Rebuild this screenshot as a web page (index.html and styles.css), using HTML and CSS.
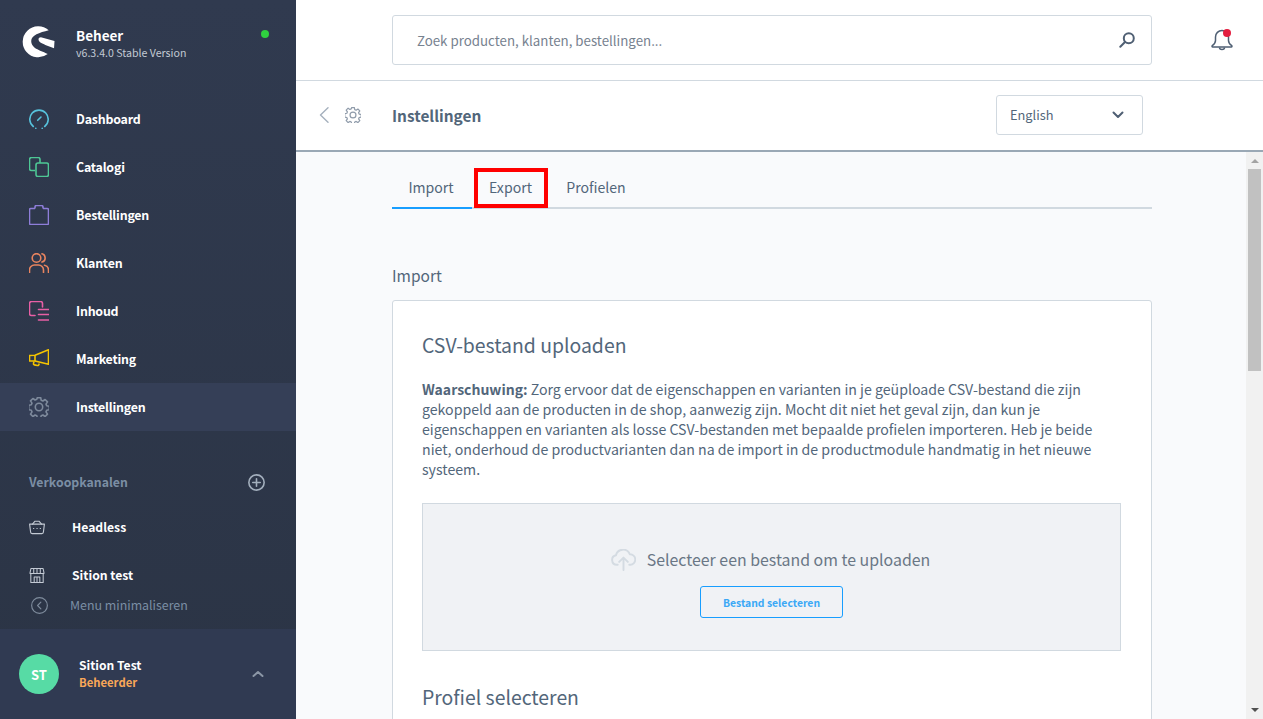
FILE: index.html
```html
<!DOCTYPE html>
<html lang="nl">
<head>
<meta charset="utf-8">
<title>Instellingen</title>
<link rel="stylesheet" href="styles.css">
</head>
<body>
<div class="app">
  <aside class="sidebar">
    <div class="brand">
      <svg class="logo" viewBox="0 0 34 34"><path fill="#fff" d="M27.500 5.500A16 16 0 1 0 26.500 30C21 26.500 9.500 25 9.500 16.500 9.500 10.500 18 8 27.500 5.500z"/><path fill="#fff" d="M19.500 12.500 33.500 16.500 33 24 24 20.500C21 19.300 17 18 17 14.800 17 13.300 18 12.500 19.500 12.500z"/></svg>
      <div class="brand-text">
        <div class="brand-name">Beheer</div>
        <div class="brand-version">v6.3.4.0 Stable Version</div>
      </div>
      <span class="status-dot"></span>
    </div>
    <nav class="main-nav">
      <a class="nav-item"><svg class="nav-icon" viewBox="0 0 20 20" fill="none" stroke="#57c2dc" stroke-width="1.600" stroke-linecap="round" stroke-linejoin="round"><path d="M4.300 17.500A9.200 9.200 0 1 1 15.700 17.500"/><path d="M8.700 11.300 12 8"/><path d="M6.800 19.300h.01M13.200 19.300h.01"/></svg><span>Dashboard</span></a>
      <a class="nav-item"><svg class="nav-icon" viewBox="0 0 20 20" fill="none" stroke="#4ec795" stroke-width="1.600" stroke-linejoin="round"><path d="M6 13.500H2.500a2 2 0 0 1-2-2V2.500a2 2 0 0 1 2-2h6.500a2 2 0 0 1 2 2V6"/><rect x="7" y="6" width="12.500" height="13.500" rx="2"/></svg><span>Catalogi</span></a>
      <a class="nav-item"><svg class="nav-icon" viewBox="0 0 20 20" fill="none" stroke="#8e7ed9" stroke-width="1.600" stroke-linejoin="round"><path d="M6 3.500H1.800a1.300 1.300 0 0 0-1.300 1.300v13.400a1.300 1.300 0 0 0 1.300 1.300h16.400a1.300 1.300 0 0 0 1.300-1.300V4.800a1.300 1.300 0 0 0-1.300-1.300H14"/><path d="M6 3.500V2a1.500 1.500 0 0 1 1.500-1.500h5A1.500 1.500 0 0 1 14 2v1.500"/></svg><span>Bestellingen</span></a>
      <a class="nav-item"><svg class="nav-icon" viewBox="0 0 20 20" fill="none" stroke="#e8845f" stroke-width="1.600" stroke-linecap="round"><circle cx="7.500" cy="5" r="4.300"/><path d="M.5 19.500v-2.500a5 5 0 0 1 5-5h4a5 5 0 0 1 5 5v2.500"/><path d="M13 .8a4.300 4.300 0 0 1 0 8.300"/><path d="M15.500 12.200a5 5 0 0 1 4 4.800v2.500"/></svg><span>Klanten</span></a>
      <a class="nav-item"><svg class="nav-icon" viewBox="0 0 20 20" fill="none" stroke="#e85fa5" stroke-width="1.600" stroke-linecap="round" stroke-linejoin="round"><path d="M13.500 6V2.500a2 2 0 0 0-2-2h-9a2 2 0 0 0-2 2v10a2 2 0 0 0 2 2H6"/><path d="M9.500 8.500h10M9.500 13.500h10M9.500 19h10"/></svg><span>Inhoud</span></a>
      <a class="nav-item"><svg class="nav-icon" viewBox="0 0 20 20" fill="none" stroke="#f5c400" stroke-width="1.600" stroke-linejoin="round"><path d="M.5 6.500 6 6.300 19.500.8v14.400L6 12H.5z"/><path d="M6 6.300V12"/><path d="M5 12.500l-.5 1.800a1.300 1.300 0 0 0 .9 1.600l3 .6a1.300 1.300 0 0 0 1.600-1.100v-1"/></svg><span>Marketing</span></a>
      <a class="nav-item is-active"><svg class="nav-icon" viewBox="0 0 20 20" fill="none" stroke="#7e8a9c" stroke-width="1.600" stroke-linejoin="round"><path d="M8.300.7h3.400l.5 2.600 1.700.7 2.200-1.500 2.400 2.400-1.500 2.200.7 1.700 2.600.5v3.400l-2.600.5-.7 1.700 1.500 2.200-2.400 2.400-2.200-1.500-1.700.7-.5 2.600H8.300l-.5-2.600-1.700-.7-2.200 1.500-2.400-2.400 1.500-2.200-.7-1.700-2.600-.5V8.300l2.600-.5.7-1.700L1.500 3.900l2.400-2.400 2.200 1.500 1.700-.7z"/><circle cx="10" cy="10" r="3.700"/></svg><span>Instellingen</span></a>
    </nav>
    <div class="channels-head">
      <span>Verkoopkanalen</span>
      <svg class="plus-icon" viewBox="0 0 16 16" fill="none" stroke="#a3afbd" stroke-width="1.500" stroke-linecap="round"><circle cx="8" cy="8" r="7.200"/><path d="M8 4.500v7M4.500 8h7"/></svg>
    </div>
    <a class="channel"><svg class="channel-icon" viewBox="0 0 16 14" fill="none" stroke="#c3cad4" stroke-width="1.100" stroke-linecap="round" stroke-linejoin="round"><path d="M.6 3.600h14.800l-1 8a1.500 1.500 0 0 1-1.500 1.500H3.100a1.500 1.500 0 0 1-1.500-1.500z"/><path d="M3.500 3.600 6 .7h4l2.500 2.900"/><path d="M4.500 8h.3M7.900 8h.3M11.200 8h.3"/></svg><span>Headless</span></a>
    <a class="channel channel-second"><svg class="channel-icon" viewBox="0 0 16 16" fill="none" stroke="#c3cad4" stroke-width="1.100" stroke-linejoin="round"><path d="M1.500.6h13l.9 4.300v1H.6v-1z"/><path d="M1.400 6v9.400h13.200V6"/><path d="M4.500.8v5M8 .8v5M11.500.8v5"/><path d="M5 15.300v-5.800h6v5.800M8 9.500v5.800"/></svg><span>Sition test</span></a>
    <a class="minimize"><svg class="minimize-icon" viewBox="0 0 16 16" fill="none" stroke="#7e8b9c" stroke-width="1.100" stroke-linecap="round" stroke-linejoin="round"><circle cx="8" cy="8" r="7.400"/><path d="M9.300 4.800 6.200 8l3.100 3.200"/></svg><span>Menu minimaliseren</span></a>
    <div class="user">
      <div class="avatar">ST</div>
      <div class="user-text">
        <div class="user-name">Sition Test</div>
        <div class="user-role">Beheerder</div>
      </div>
      <svg class="user-caret" viewBox="0 0 12 8" fill="none" stroke="#8b96a6" stroke-width="2" stroke-linecap="round" stroke-linejoin="round"><path d="M1.500 6 6 2l4.500 4"/></svg>
    </div>
  </aside>
  <main class="main">
    <header class="search-bar">
      <div class="search">
        <span class="search-placeholder">Zoek producten, klanten, bestellingen...</span>
        <svg class="search-icon" viewBox="0 0 16 16" fill="none" stroke="#4f5f73" stroke-width="2" stroke-linecap="round"><circle cx="9.800" cy="6.200" r="5"/><path d="M6 10 1.300 14.700"/></svg>
      </div>
      <div class="bell">
        <svg class="bell-icon" viewBox="0 0 22 22" fill="none" stroke="#4f5f73" stroke-width="1.500" stroke-linejoin="round"><path d="M11 1.500a6.500 6.500 0 0 0-6.500 6.500v3.500c0 2.500-1.500 4-3.200 5.200-.5.400-.3 1.300.4 1.300h18.600c.7 0 .9-.9.400-1.300-1.700-1.200-3.200-2.700-3.200-5.200V8A6.500 6.500 0 0 0 11 1.500z"/><path d="M8.500 18.500a2.500 2 0 0 0 5 0"/></svg>
        <span class="bell-badge"></span>
      </div>
    </header>
    <div class="smart-bar">
      <div class="smart-nav">
        <svg class="back-icon" viewBox="0 0 10 16" fill="none" stroke="#a5b0bd" stroke-width="1.400" stroke-linecap="round" stroke-linejoin="round"><path d="M9 .8 1.500 8 9 15.200"/></svg>
        <svg class="smart-gear" viewBox="0 0 20 20" fill="none" stroke="#8f9baa" stroke-width="1.500" stroke-linejoin="round"><path d="M8.300.7h3.400l.5 2.600 1.700.7 2.200-1.500 2.400 2.400-1.500 2.200.7 1.700 2.600.5v3.400l-2.600.5-.7 1.700 1.500 2.200-2.400 2.400-2.200-1.500-1.700.7-.5 2.600H8.300l-.5-2.600-1.700-.7-2.200 1.500-2.400-2.400 1.500-2.200-.7-1.700-2.600-.5V8.300l2.600-.5.7-1.700L1.500 3.900l2.400-2.400 2.200 1.500 1.700-.7z"/><circle cx="10" cy="10" r="3.700"/></svg>
      </div>
      <h1 class="smart-title">Instellingen</h1>
      <div class="lang-select">
        <span>English</span>
        <svg class="lang-caret" viewBox="0 0 12 8" fill="none" stroke="#4f5f73" stroke-width="2" stroke-linecap="round" stroke-linejoin="round"><path d="M1.500 1.500 6 6l4.500-4.500"/></svg>
      </div>
    </div>
    <div class="body-row">
      <div class="content">
        <div class="column">
          <div class="tabs">
            <span class="tab is-current">Import</span>
            <span class="tab tab-highlight">Export</span>
            <span class="tab">Profielen</span>
          </div>
          <h2 class="section-title">Import</h2>
          <section class="card">
            <h3 class="card-title">CSV-bestand uploaden</h3>
            <p class="card-text"><strong>Waarschuwing:</strong> Zorg ervoor dat de eigenschappen en varianten in je geüploade CSV-bestand die zijn gekoppeld aan de producten in de shop, aanwezig zijn. Mocht dit niet het geval zijn, dan kun je eigenschappen en varianten als losse CSV-bestanden met bepaalde profielen importeren. Heb je beide niet, onderhoud de productvarianten dan na de import in de productmodule handmatig in het nieuwe systeem.</p>
            <div class="dropzone">
              <div class="drop-line">
                <svg class="cloud-icon" viewBox="0 0 26 22" fill="none" stroke="#d4dbe2" stroke-width="2" stroke-linecap="round" stroke-linejoin="round"><path d="M7 16H6a5 5 0 0 1-.8-9.900A7.500 7.500 0 0 1 19.500 5a5.500 5.500 0 0 1 .5 11h-1"/><path d="M13 21.500V9M8.500 13 13 8.500 17.500 13"/></svg>
                <span>Selecteer een bestand om te uploaden</span>
              </div>
              <button class="upload-btn">Bestand selecteren</button>
            </div>
            <h3 class="card-title profile-title">Profiel selecteren</h3>
          </section>
        </div>
      </div>
      <div class="scrollbar">
        <span class="scroll-arrow"></span>
        <span class="scroll-thumb"></span>
        <span class="scroll-arrow-down"></span>
      </div>
    </div>
  </main>
</div>
</body>
</html>
```
FILE: styles.css
```css
* { box-sizing: border-box; }
html, body { margin: 0; height: 100%; overflow: hidden; }
body { font-family: "Noto Sans CJK SC", "Noto Sans", sans-serif; color: #52667a; background: #fff; }
.app { display: flex; width: 1263px; height: 719px; }

.sidebar { width: 296px; height: 719px; flex: none; display: flex; flex-direction: column; background: linear-gradient(#303a4f, #2b3445); color: #fff; }
.brand { height: 83px; flex: none; display: flex; align-items: flex-start; padding: 25px 0 0 22px; position: relative; }
.logo { width: 33px; height: 33px; flex: none; }
.brand-text { margin-left: 21px; }
.brand-name { font-size: 13.500px; line-height: 20px; font-weight: 700; }
.brand-version { font-size: 10.600px; line-height: 16px; color: #c3cad4; }
.status-dot { position: absolute; left: 261px; top: 30px; width: 8px; height: 8px; border-radius: 50%; background: #2fd13f; }
.main-nav { margin-top: 12px; display: flex; flex-direction: column; }
.nav-item { height: 48px; display: flex; align-items: center; padding-left: 29px; font-size: 12.400px; letter-spacing: -.2px; font-weight: 700; }
.nav-item span { margin-left: 27px; }
.nav-item.is-active { background: #353f57; }
.nav-icon { width: 20px; height: 20px; flex: none; }
.channels-head { display: flex; justify-content: space-between; align-items: center; padding: 0 31px 0 29px; margin-top: 42px; height: 18px; font-size: 12.300px; font-weight: 700; color: #7b8ea4; }
.plus-icon { width: 17px; height: 17px; }
.channel { display: flex; align-items: center; height: 20px; padding-left: 29px; font-size: 12.200px; font-weight: 700; margin-top: 26px; }
.channel span { margin-left: 27px; }
.channel-second { margin-top: 28px; }
.channel-icon { width: 16px; height: 15px; flex: none; }
.minimize { display: flex; align-items: center; height: 16px; padding-left: 31px; margin-top: 12px; font-size: 12.400px; color: #7b8ea4; }
.minimize span { margin-left: 22px; }
.minimize-icon { width: 17px; height: 17px; flex: none; }
.user { margin-top: auto; height: 90px; flex: none; background: #303a52; display: flex; align-items: center; padding-left: 19px; }
.avatar { width: 40px; height: 40px; border-radius: 50%; background: #57dba5; color: #fff; font-size: 13px; font-weight: 700; display: flex; align-items: center; justify-content: center; flex: none; }
.user-text { margin: -2px 0 0 20px; }
.user-name { font-size: 12.100px; line-height: 18px; font-weight: 700; }
.user-role { font-size: 11.300px; line-height: 16px; font-weight: 700; color: #f8a758; }
.user-caret { width: 12px; height: 8px; margin-left: auto; margin-right: 32px; }

.main { flex: 1; min-width: 0; display: flex; flex-direction: column; background: #fff; }
.search-bar { height: 81px; flex: none; border-bottom: 1px solid #d1d9e0; display: flex; align-items: flex-start; padding: 15px 0 0 96px; }
.search { width: 759.500px; height: 50px; border: 1px solid #d1d9e0; border-radius: 3px; display: flex; align-items: center; justify-content: space-between; padding: 0 16px 0 24px; font-size: 13.300px; color: #77828f; }
.search-icon { width: 16px; height: 16px; }
.bell { position: relative; width: 22px; height: 22px; margin: 14px 0 0 59.500px; }
.bell-icon { width: 22px; height: 22px; display: block; }
.bell-badge { position: absolute; left: 12px; top: 0; width: 8px; height: 8px; border-radius: 50%; background: #e31e3f; }
.smart-bar { height: 71px; flex: none; border-bottom: 2px solid #9aa8b5; display: flex; align-items: flex-start; padding: 14px 0 0 23px; }
.smart-nav { width: 73px; height: 40px; display: flex; align-items: center; gap: 16px; }
.back-icon { width: 10px; height: 16px; }
.smart-gear { width: 16px; height: 16px; }
.smart-title { margin: 0; font-size: 15.400px; line-height: 40px; font-weight: 600; color: #52667a; }
.lang-select { margin-left: auto; margin-right: 120px; width: 147px; height: 40px; border: 1px solid #d1d9e0; border-radius: 3px; display: flex; align-items: center; justify-content: space-between; padding: 0 18px 1px 13px; font-size: 12.800px; }
.lang-caret { width: 12px; height: 8px; margin-top: 1px; }

.body-row { flex: 1; min-height: 0; display: flex; background: #f9fafc; }
.content { flex: 1; min-width: 0; overflow: hidden; padding-left: 96px; }
.column { width: 759.500px; }
.tabs { display: flex; height: 57px; padding: 14px 0 0; border-bottom: 2px solid #d1d9e0; font-size: 14.100px; }
.tab { height: 43px; width: 80px; line-height: 42px; text-align: center; color: #52667a; }
.tab.is-current { border-bottom: 2px solid #189eff; padding-right: 2px; }
.tab-highlight { width: 74px; line-height: 30px; height: 40px; border: 4px solid #f00; margin: 2px 0 0 2px; padding-right: 1px; }
.tab:last-child { margin-left: 8px; }
.section-title { margin: 0; padding-top: 55px; font-size: 15.500px; line-height: 22px; font-weight: 400; color: #52667a; }
.card { margin-top: 14px; background: #fff; border: 1px solid #d1d9e0; border-radius: 3px; padding: 29px 29.500px 0 29px; height: 500px; }
.card-title { margin: 0; font-size: 19.400px; line-height: 30px; font-weight: 400; color: #52667a; }
.card-text { margin: 19px 0 0; font-size: 14.150px; line-height: 20px; color: #52667a; }
.card-text strong { font-size: 14px; font-weight: 700; }
.dropzone { margin-top: 24px; height: 148px; background: #f0f2f5; border: 1px solid #d1d9e0; display: flex; flex-direction: column; align-items: center; padding-top: 44px; }
.drop-line { display: flex; align-items: center; gap: 11px; padding-right: 2px; font-size: 15.900px; line-height: 24px; color: #6a7785; }
.cloud-icon { width: 25px; height: 22px; }
.upload-btn { margin-top: 14px; width: 143px; height: 32px; background: transparent; border: 1px solid #189eff; border-radius: 3px; color: #3aa8f5; font: 700 10.400px "Noto Sans CJK SC", sans-serif; padding: 0; }
.profile-title { margin-top: 31px; }
.scrollbar { width: 17px; flex: none; background: #f1f1f1; display: flex; flex-direction: column; align-items: center; }
.scroll-arrow { width: 0; height: 0; margin-top: 7px; border-left: 4px solid transparent; border-right: 4px solid transparent; border-bottom: 4px solid #a3a3a3; }
.scroll-thumb { margin-top: 6px; width: 13px; height: 202px; background: #c1c1c1; }
.scroll-arrow-down { width: 0; height: 0; margin-top: auto; margin-bottom: 7px; border-left: 4px solid transparent; border-right: 4px solid transparent; border-top: 4px solid #505050; }
```
